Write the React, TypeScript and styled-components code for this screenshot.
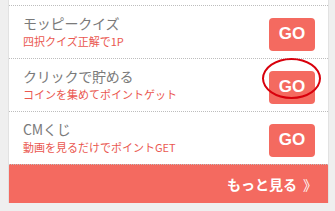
import React from 'react'
import styled, { createGlobalStyle } from 'styled-components'

const GlobalStyle = createGlobalStyle`
  html, body {
    margin: 0;
    padding: 0;
    background: #efefef;
  }
  body {
    font-family: "Noto Sans CJK JP", "Noto Sans", sans-serif;
  }
`

const items = [
  { title: 'モッピークイズ', sub: '四択クイズ正解で1P', marked: false },
  { title: 'クリックで貯める', sub: 'コインを集めてポイントゲット', marked: true },
  { title: 'CMくじ', sub: '動画を見るだけでポイントGET', marked: false },
]

const App: React.FC = () => (
  <>
    <GlobalStyle />
    <Page>
      <Panel>
        <List>
          {items.map((item) => (
            <Row key={item.title}>
              <Texts>
                <Title>{item.title}</Title>
                <Sub>{item.sub}</Sub>
              </Texts>
              <GoWrap>
                <GoButton>GO</GoButton>
                {item.marked && <Mark />}
              </GoWrap>
            </Row>
          ))}
        </List>
        <Footer>
          <MoreText>もっと見る</MoreText>
          <Chevron>》</Chevron>
        </Footer>
      </Panel>
    </Page>
  </>
)

const Page = styled.div`
  width: 335px;
  height: 211px;
  padding: 0 6px 0 8px;
  box-sizing: border-box;
  overflow: hidden;
`

const Panel = styled.div`
  background: #fff;
  border-left: 1px solid #e2e2e2;
  border-right: 1px solid #e2e2e2;
  padding-top: 5px;
  display: flex;
  flex-direction: column;
`

const List = styled.ul`
  list-style: none;
  margin: 0;
  padding: 0;
`

const Row = styled.li`
  height: 53px;
  box-sizing: border-box;
  border-top: 1px dotted #bdbdbd;
  display: flex;
  align-items: center;
  justify-content: space-between;
  padding: 0 13px 0 14px;
`

const Texts = styled.div`
  display: flex;
  flex-direction: column;
  margin-top: -2px;
`

const Title = styled.div`
  font-size: 14px;
  line-height: 20px;
  color: #7a7a7a;
  letter-spacing: -0.2px;
`

const Sub = styled.div`
  font-size: 11px;
  line-height: 16px;
  color: #ea5750;
`

const GoWrap = styled.div`
  position: relative;
  margin-top: 4px;
`

const GoButton = styled.div`
  width: 46px;
  height: 33px;
  border-radius: 4px;
  background: #f46a60;
  color: #fff;
  font-family: "Liberation Sans", Arial, sans-serif;
  font-weight: bold;
  font-size: 17px;
  display: flex;
  align-items: center;
  justify-content: center;
`

const Mark = styled.div`
  position: absolute;
  left: -7px;
  top: -13px;
  width: 59px;
  height: 41px;
  border: 2px solid #d8000c;
  border-radius: 50%;
  box-sizing: border-box;
`

const Footer = styled.div`
  height: 39px;
  border-top: 1px dotted #bdbdbd;
  box-sizing: border-box;
  background: #f46a60;
  display: flex;
  align-items: center;
  justify-content: flex-end;
  gap: 6px;
  padding-right: 11px;
  color: #fff;
`

const MoreText = styled.span`
  font-size: 14px;
  font-weight: bold;
`

const Chevron = styled.span`
  font-size: 14px;
`

export default App
